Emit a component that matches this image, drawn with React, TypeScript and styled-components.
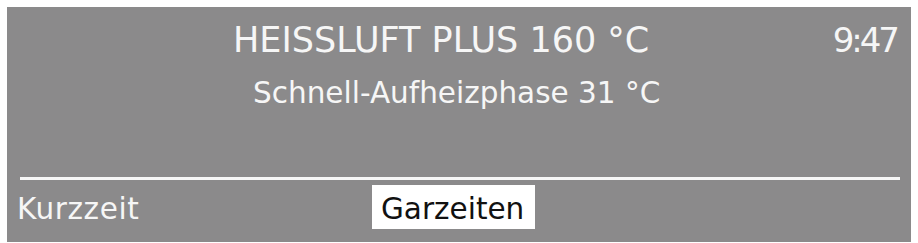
import React from "react";
import styled, { createGlobalStyle } from "styled-components";

const GlobalStyle = createGlobalStyle`
  html, body { margin: 0; padding: 0; background: #ffffff; }
  body { font-family: "DejaVu Sans", "Liberation Sans", sans-serif; }
`;

const Page = styled.div`
  padding: 7px 7px 0 7px;
  width: 918px;
  height: 243px;
  box-sizing: border-box;
  overflow: hidden;
`;

const Panel = styled.div`
  background: #8b8a8b;
  width: 904px;
  height: 235px;
  box-sizing: border-box;
  padding-top: 13px;
  display: flex;
  flex-direction: column;
  color: #f6f6f6;
`;

const Header = styled.div`
  display: grid;
  grid-template-columns: 1fr auto;
  align-items: start;
  padding: 0 14px 0 226px;
`;

const Title = styled.div`
  font-size: 35px;
  line-height: 40px;
  white-space: nowrap;
`;

const Clock = styled.div`
  font-size: 34px;
  line-height: 40px;
  letter-spacing: -3px;
`;

const Subtitle = styled.div`
  font-size: 29.5px;
  line-height: 34px;
  margin-top: 16px;
  padding-left: 246px;
  white-space: nowrap;
`;

const Divider = styled.div`
  margin: auto 11px 0 13px;
  height: 3px;
  background: #f6f6f6;
`;

const Footer = styled.div`
  display: grid;
  grid-template-columns: 364px auto;
  justify-content: start;
  margin-top: 5px;
  padding-left: 1px;
  margin-bottom: 13px;
`;

const Softkey = styled.div<{ $selected?: boolean }>`
  justify-self: start;
  font-size: 29.5px;
  line-height: 39px;
  height: 44px;
  box-sizing: border-box;
  padding: 5px 11px 0 9px;
  background: ${(p) => (p.$selected ? "#ffffff" : "transparent")};
  color: ${(p) => (p.$selected ? "#111111" : "#f6f6f6")};
  letter-spacing: ${(p) => (p.$selected ? "0" : "0.6px")};
  white-space: nowrap;
`;

export default function App() {
  return (
    <>
      <GlobalStyle />
      <Page>
        <Panel>
          <Header>
            <Title>HEISSLUFT PLUS 160 °C</Title>
            <Clock>9:47</Clock>
          </Header>
          <Subtitle>Schnell-Aufheizphase 31 °C</Subtitle>
          <Divider />
          <Footer>
            <Softkey>Kurzzeit</Softkey>
            <Softkey $selected>Garzeiten</Softkey>
          </Footer>
        </Panel>
      </Page>
    </>
  );
}
